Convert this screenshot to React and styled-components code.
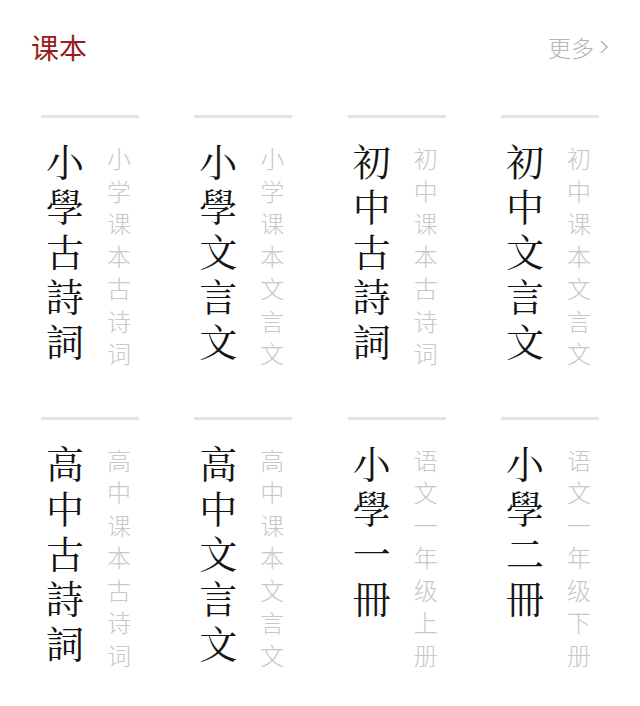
import React from 'react';
import styled, { createGlobalStyle } from 'styled-components';

const GlobalStyle = createGlobalStyle`
  html, body {
    margin: 0;
    padding: 0;
    background: #ffffff;
  }
  body {
    font-family: "Noto Sans CJK SC", "Noto Sans", sans-serif;
  }
`;

const Page = styled.div`
  width: 640px;
  min-height: 706px;
  background: #fff;
  padding-top: 33px;
  box-sizing: border-box;
`;

const Header = styled.div`
  display: flex;
  align-items: center;
  justify-content: space-between;
  padding: 0 32px 0 31px;
  height: 28px;
`;

const Title = styled.h2`
  margin: 0;
  font-size: 28px;
  line-height: 28px;
  font-weight: 400;
  color: #981c1c;
`;

const More = styled.a`
  display: flex;
  align-items: center;
  gap: 6px;
  font-size: 23px;
  line-height: 23px;
  color: #b5b5b5;
  text-decoration: none;
  font-weight: 300;
`;

const Grid = styled.div`
  display: grid;
  grid-template-columns: repeat(4, 98px);
  justify-content: space-between;
  row-gap: 47px;
  padding: 54px 41px 0;
`;

const Card = styled.div`
  border-top: 3px solid #e4e4e4;
  padding-top: 19px;
  display: flex;
  align-items: flex-start;
`;

const Main = styled.div`
  width: 1em;
  margin-left: 5px;
  font-family: "AR PL UKai TW", "Noto Serif CJK TC", "Noto Sans CJK TC", serif;
  font-size: 38px;
  line-height: 45px;
  color: #141414;
  word-break: break-all;
`;

const Sub = styled.div`
  width: 1em;
  margin-left: 23px;
  margin-top: 5px;
  font-family: "Noto Sans CJK SC", sans-serif;
  font-size: 24px;
  line-height: 32.5px;
  font-weight: 300;
  color: #c8c8c8;
  word-break: break-all;
`;

const books = [
  { title: '小學古詩詞', sub: '小学课本古诗词' },
  { title: '小學文言文', sub: '小学课本文言文' },
  { title: '初中古詩詞', sub: '初中课本古诗词' },
  { title: '初中文言文', sub: '初中课本文言文' },
  { title: '高中古詩詞', sub: '高中课本古诗词' },
  { title: '高中文言文', sub: '高中课本文言文' },
  { title: '小學一冊', sub: '语文一年级上册' },
  { title: '小學二冊', sub: '语文一年级下册' },
];

const App = () => {
  return (
    <Page>
      <GlobalStyle />
      <Header>
        <Title>课本</Title>
        <More href="#">
          更多
          <svg width="8" height="14" viewBox="0 0 8 14">
            <polyline points="1,1 7,7 1,13" fill="none" stroke="#b5b5b5" strokeWidth="1.5" />
          </svg>
        </More>
      </Header>
      <Grid>
        {books.map((b) => (
          <Card key={b.title}>
            <Main>{b.title}</Main>
            <Sub>{b.sub}</Sub>
          </Card>
        ))}
      </Grid>
    </Page>
  );
};

export default App;
